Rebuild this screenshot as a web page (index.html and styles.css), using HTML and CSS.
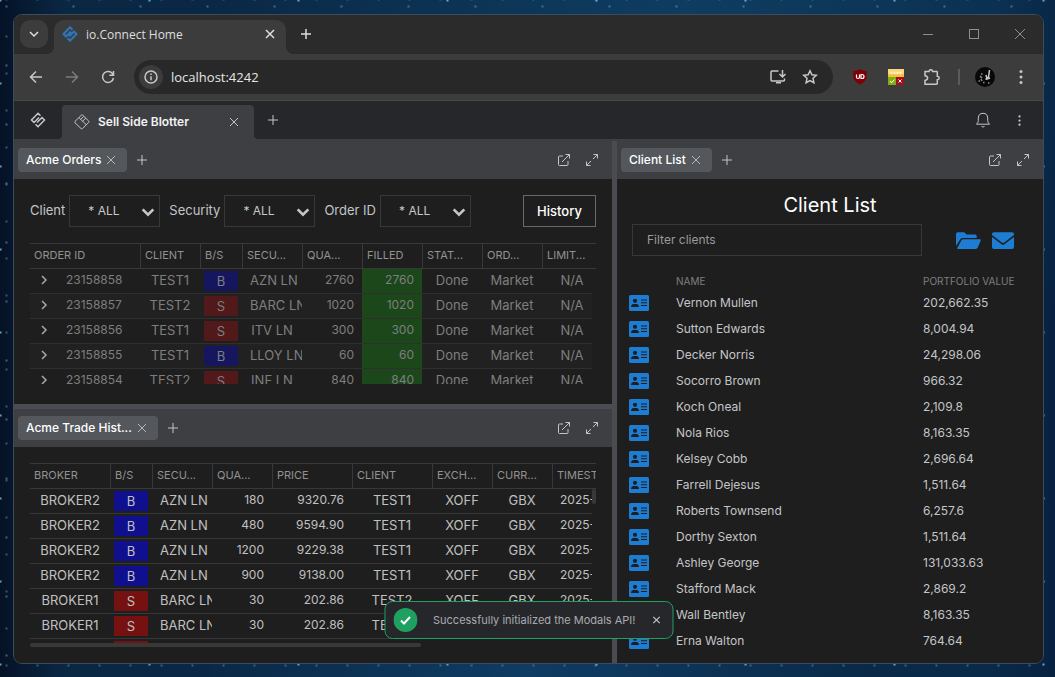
FILE: index.html
```html
<!DOCTYPE html>
<html lang="en">
<head>
<meta charset="utf-8">
<title>io.Connect Home</title>
<link rel="stylesheet" href="styles.css">
</head>
<body>
<svg class="defs" aria-hidden="true">
  <symbol id="close" viewBox="0 0 10 10"><path d="M1 1l8 8M9 1l-8 8"/></symbol>
  <symbol id="plus" viewBox="0 0 10 10"><path d="M5 0v10M0 5h10"/></symbol>
  <symbol id="chev" viewBox="0 0 12 12"><path d="M2 4l4 4 4-4"/></symbol>
  <symbol id="right" viewBox="0 0 10 10"><path d="M3 1l4 4-4 4"/></symbol>
  <symbol id="popout" viewBox="0 0 14 14"><path d="M6 3H2.500q-1 0-1 1v7.500q0 1 1 1H10q1 0 1-1V8M5 9l7.500-7.500M8.500 1.500h4v4"/></symbol>
  <symbol id="expand" viewBox="0 0 14 14"><path d="M8.500 1.500h4v4M12.500 1.500L8 6M1.500 8.500v4h4M1.500 12.500L6 8"/></symbol>
  <symbol id="dots" viewBox="0 0 4 16"><circle cx="2" cy="2.500" r="1.500"/><circle cx="2" cy="8" r="1.500"/><circle cx="2" cy="13.500" r="1.500"/></symbol>
  <symbol id="logo" viewBox="0 0 16 16"><path d="M10.500 3.800L8 1.300 1.500 8 4 10.500l5-5M5.500 12.200L8 14.700 14.500 8 12 5.500l-5 5"/></symbol>
  <symbol id="card" viewBox="0 0 20 16"><rect width="20" height="16" rx="1.500" fill="#1d7dd3"/><g fill="#1e1e1e"><circle cx="6" cy="5.800" r="2.100"/><path d="M2 12q.3-3 2.500-3h3q2.200 0 2.500 3z"/><path d="M12 4.500h6v1h-6zM12 7.200h6v1h-6zM12 9.900h6v1h-6z"/></g></symbol>
</svg>
<div class="window">
  <header class="titlebar">
    <button class="tab-search" aria-label="Search tabs"><svg class="ic12 bold"><use href="#chev"/></svg></button>
    <div class="browser-tab">
      <svg class="ic16 blue"><use href="#logo"/></svg>
      <span class="tab-title">io.Connect Home</span>
      <button aria-label="Close tab"><svg class="ic10 bold"><use href="#close"/></svg></button>
    </div>
    <button class="new-tab" aria-label="New tab"><svg class="ic10 bold"><use href="#plus"/></svg></button>
    <div class="win-controls">
      <button aria-label="Minimize"><svg class="ic10" viewBox="0 0 10 10"><path d="M0 5.500h10"/></svg></button>
      <button aria-label="Maximize"><svg class="ic10" viewBox="0 0 10 10"><rect x=".5" y=".5" width="9" height="9"/></svg></button>
      <button aria-label="Close"><svg class="ic10" viewBox="0 0 10 10"><path d="M0 0l10 10M10 0L0 10"/></svg></button>
    </div>
  </header>
  <div class="toolbar">
    <button aria-label="Back"><svg class="ic14 bold" viewBox="0 0 14 14"><path d="M13 7H1.500M7 1.500L1.500 7 7 12.500"/></svg></button>
    <button class="faded" aria-label="Forward"><svg class="ic14 bold" viewBox="0 0 14 14"><path d="M1 7h11.500M7 1.500L12.500 7 7 12.500"/></svg></button>
    <button aria-label="Reload"><svg class="ic14 bold" viewBox="0 0 14 14"><path d="M12 4.500A5.500 5.500 0 1 0 12.500 8M12.500 1v4.200H8.300"/></svg></button>
    <div class="address">
      <button class="info" aria-label="Site information"><svg class="ic14" viewBox="0 0 14 14"><circle cx="7" cy="7" r="6" stroke-width="1.500"/><path d="M7 6.300v4M7 3.500v1.500" stroke-width="1.500"/></svg></button>
      <input aria-label="Address" value="localhost:4242">
      <button aria-label="Install"><svg class="ic16 bold" viewBox="0 0 16 16"><path d="M8.500 2H2q-1 0-1 1v8q0 1 1 1h11.500q1 0 1-1V9.500M12.500 1v6.500M9.500 5l3 3 3-3M6 13.800h5" /></svg></button>
      <button aria-label="Bookmark"><svg class="ic16 bold" viewBox="0 0 16 16"><path d="M8 1.800l1.900 4 4.400.5-3.300 3 .9 4.400L8 11.500l-3.900 2.200.9-4.400-3.300-3 4.400-.5z"/></svg></button>
    </div>
    <button class="ext" aria-label="Content blocker"><svg class="ic16" viewBox="0 0 16 16"><path d="M8 .3q3 1.700 6.700 1.700v5.500Q14.700 12 8 15.700 1.300 12 1.300 7.500V2Q5 2 8 .3z" fill="#800007" stroke="none"/><path d="M4.500 5.500v2.500q0 1.500 1.500 1.500t1.500-1.500V5.500M9 5.500h1q2 0 2 2t-2 2H9z" stroke="#fff" stroke-width="1.200"/></svg></button>
    <button class="ext" aria-label="Validator"><svg class="ic16" viewBox="0 0 16 16"><g stroke="none"><path d="M0 0h16v8H0z" fill="#f5bf38"/><path d="M0 0h16v5H0z" fill="#fad77c"/><path d="M0 8h8v8H0z" fill="#82ad12"/><path d="M8 8h8v8H8z" fill="#a01018"/></g><path d="M2.500 4h11" stroke="#fff2cf" stroke-width="2.500" stroke-dasharray="2 1"/><path d="M2 12l1.500 1.800L6.500 10.500M10.500 10.500l3 3M13.500 10.500l-3 3" stroke="#fff"/></svg></button>
    <button class="ext" aria-label="Extensions"><svg class="ic16 bold" viewBox="0 0 16 16"><path d="M1 2.500h4q.2-1.800 1.800-1.800t1.800 1.800h4q.7 0 .7.700v4q1.900.2 1.900 1.800t-1.900 1.800v3.700q0 .7-.7.700H1v-3.800q2.600-.3 2.600-2.300T1 6.800z"/></svg></button>
    <span class="divider"></span>
    <button class="avatar" aria-label="Profile"><svg viewBox="0 0 20 20"><circle cx="10" cy="10" r="10" fill="#080808" stroke="none"/><path d="M14.500 3l-1 7-3 2.500M11 8l1 4 3-1" stroke="#c8c8c8" stroke-width="1.500"/><path d="M5 9l2 2M6 7h1.500M8 15.500h1.500M13 16h1.500M3.500 14h1.500M6 12l1 2" stroke="#8c8c8c" stroke-width="1.500"/></svg></button>
    <button class="more" aria-label="Menu"><svg class="dots"><use href="#dots"/></svg></button>
  </div>

  <nav class="workspace-bar">
    <button class="home" aria-label="Home"><svg class="ic16 mark"><use href="#logo"/></svg></button>
    <div class="workspace-tab">
      <svg class="ic16" viewBox="0 0 16 16"><path d="M8.700 1.200l6 5.800q.7.700 0 1.400L8.500 14.600q-.7.600-1.400 0L1 8.800q-.7-.7 0-1.400l6.300-6.200q.7-.7 1.400 0zM5 3.700l7 6.800M8.500 7.200l3.300-3M5 3.700M9.700 8.300l0 0M6.700 5.400l3-3"/></svg>
      <span class="tab-title">Sell Side Blotter</span>
      <button aria-label="Close workspace"><svg class="ic10"><use href="#close"/></svg></button>
    </div>
    <button class="new-tab" aria-label="New workspace"><svg class="ic10"><use href="#plus"/></svg></button>
    <button class="push icon-btn" aria-label="Notifications"><svg class="ic16" viewBox="0 0 16 16"><path d="M1.500 12.200q1.800-1.500 1.800-3.700V6Q3.500 1.300 8 1.300T12.700 6v2.500q0 2.200 1.800 3.700zM6.500 14.500q1.500 1 3 0"/></svg></button>
    <button class="icon-btn" aria-label="Workspace menu"><svg class="dots thin"><use href="#dots"/></svg></button>
  </nav>

  <main class="workspace">
    <div class="column">
      <section class="panel">
        <header class="group-bar first">
          <div class="group-tab"><span>Acme Orders</span><button aria-label="Close Acme Orders"><svg class="ic10"><use href="#close"/></svg></button></div>
          <button class="add" aria-label="Add"><svg class="ic10"><use href="#plus"/></svg></button>
          <button class="push icon28" aria-label="Pop out"><svg class="ic14"><use href="#popout"/></svg></button>
          <button class="icon28" aria-label="Maximize"><svg class="ic14"><use href="#expand"/></svg></button>
        </header>
        <div class="content">
          <form class="filters">
            <label>Client <span class="select"><select><option>* ALL</option></select><svg class="arrow"><use href="#chev"/></svg></span></label>
            <label>Security <span class="select"><select><option>* ALL</option></select><svg class="arrow"><use href="#chev"/></svg></span></label>
            <label>Order ID <span class="select"><select><option>* ALL</option></select><svg class="arrow"><use href="#chev"/></svg></span></label>
            <button type="button" class="history">History</button>
          </form>
          <div class="grid orders">
            <table>
              <colgroup><col class="w110"><col class="w60"><col class="w42"><col class="w60"><col class="w60"><col class="w60"><col class="w60"><col class="w60"><col class="w60"></colgroup>
              <thead><tr><th>ORDER ID</th><th>CLIENT</th><th>B/S</th><th>SECU...</th><th>QUA...</th><th>FILLED</th><th>STAT...</th><th>ORD...</th><th>LIMIT...</th></tr></thead>
              <tbody>
                <tr><td class="oid"><svg class="ic10 bold"><use href="#right"/></svg>23158858</td><td>TEST1</td><td class="side"><b class="buy">B</b></td><td>AZN LN</td><td class="num">2760</td><td class="num fill">2760</td><td>Done</td><td>Market</td><td>N/A</td></tr>
                <tr><td class="oid"><svg class="ic10 bold"><use href="#right"/></svg>23158857</td><td>TEST2</td><td class="side"><b class="sell">S</b></td><td>BARC LN</td><td class="num">1020</td><td class="num fill">1020</td><td>Done</td><td>Market</td><td>N/A</td></tr>
                <tr><td class="oid"><svg class="ic10 bold"><use href="#right"/></svg>23158856</td><td>TEST1</td><td class="side"><b class="sell">S</b></td><td>ITV LN</td><td class="num">300</td><td class="num fill">300</td><td>Done</td><td>Market</td><td>N/A</td></tr>
                <tr><td class="oid"><svg class="ic10 bold"><use href="#right"/></svg>23158855</td><td>TEST1</td><td class="side"><b class="buy">B</b></td><td>LLOY LN</td><td class="num">60</td><td class="num fill">60</td><td>Done</td><td>Market</td><td>N/A</td></tr>
                <tr><td class="oid"><svg class="ic10 bold"><use href="#right"/></svg>23158854</td><td>TEST2</td><td class="side"><b class="sell">S</b></td><td>INF LN</td><td class="num">840</td><td class="num fill">840</td><td>Done</td><td>Market</td><td>N/A</td></tr>
              </tbody>
            </table>
            <div class="track"></div>
          </div>
        </div>
      </section>
      <div class="splitter"></div>
      <section class="panel">
        <header class="group-bar">
          <div class="group-tab"><span>Acme Trade Hist...</span><button aria-label="Close Acme Trade History"><svg class="ic10"><use href="#close"/></svg></button></div>
          <button class="add" aria-label="Add"><svg class="ic10"><use href="#plus"/></svg></button>
          <button class="push icon28" aria-label="Pop out"><svg class="ic14"><use href="#popout"/></svg></button>
          <button class="icon28" aria-label="Maximize"><svg class="ic14"><use href="#expand"/></svg></button>
        </header>
        <div class="content">
          <div class="grid trades">
            <table>
              <colgroup><col class="w80"><col class="w42"><col class="w60"><col class="w60"><col class="w80"><col class="w80"><col class="w60"><col class="w60"><col class="w110"></colgroup>
              <thead><tr><th>BROKER</th><th>B/S</th><th>SECU...</th><th>QUA...</th><th>PRICE</th><th>CLIENT</th><th>EXCH...</th><th>CURR...</th><th>TIMESTAMP</th></tr></thead>
              <tbody>
                <tr><td>BROKER2</td><td class="side"><b class="buy">B</b></td><td>AZN LN</td><td class="num">180</td><td class="num">9320.76</td><td>TEST1</td><td>XOFF</td><td>GBX</td><td class="date">2025-</td></tr>
                <tr><td>BROKER2</td><td class="side"><b class="buy">B</b></td><td>AZN LN</td><td class="num">480</td><td class="num">9594.90</td><td>TEST1</td><td>XOFF</td><td>GBX</td><td class="date">2025-</td></tr>
                <tr><td>BROKER2</td><td class="side"><b class="buy">B</b></td><td>AZN LN</td><td class="num">1200</td><td class="num">9229.38</td><td>TEST1</td><td>XOFF</td><td>GBX</td><td class="date">2025-</td></tr>
                <tr><td>BROKER2</td><td class="side"><b class="buy">B</b></td><td>AZN LN</td><td class="num">900</td><td class="num">9138.00</td><td>TEST1</td><td>XOFF</td><td>GBX</td><td class="date">2025-</td></tr>
                <tr><td>BROKER1</td><td class="side"><b class="sell">S</b></td><td>BARC LN</td><td class="num">30</td><td class="num">202.86</td><td>TEST2</td><td>XOFF</td><td>GBX</td><td class="date">2025-</td></tr>
                <tr><td>BROKER1</td><td class="side"><b class="sell">S</b></td><td>BARC LN</td><td class="num">30</td><td class="num">202.86</td><td>TEST2</td><td>XOFF</td><td>GBX</td><td class="date">2025-</td></tr>
                <tr><td></td><td class="side"><b class="sell"></b></td><td></td><td></td><td></td><td></td><td></td><td></td><td></td></tr>
              </tbody>
            </table>
            <div class="track"><div class="thumb"></div></div>
          </div>
          <div class="h-thumb"></div>
        </div>
      </section>
    </div>
    <div class="splitter vertical"></div>
    <section class="panel">
      <header class="group-bar first">
        <div class="group-tab"><span>Client List</span><button aria-label="Close Client List"><svg class="ic10"><use href="#close"/></svg></button></div>
        <button class="add" aria-label="Add"><svg class="ic10"><use href="#plus"/></svg></button>
        <button class="push icon28" aria-label="Pop out"><svg class="ic14"><use href="#popout"/></svg></button>
        <button class="icon28" aria-label="Maximize"><svg class="ic14"><use href="#expand"/></svg></button>
      </header>
      <div class="content clients">
        <h1>Client List</h1>
        <div class="search">
          <input type="text" placeholder="Filter clients" aria-label="Filter clients">
          <button aria-label="Open folder"><svg class="folder" viewBox="0 0 25 17"><path d="M0 14V2Q0 .3 1.700.3h6.500L10.500 2.500H19q1.700 0 1.700 1.700V6H7Q4.800 6 3.800 8z"/><path d="M5.200 8.700q.6-1.400 2-1.400H24q1.200 0 .7 1.300L21.800 15.500q-.6 1.400-2 1.400H2q-1.200 0-.5-1.300z"/></svg></button>
          <button aria-label="Send mail"><svg class="mail" viewBox="0 0 22 17"><path d="M2 .3h18q2 0 2 1.700v1L11.800 10.700q-.8.600-1.600 0L0 3V2Q0 .3 2 .3z"/><path d="M0 5l9.600 7.300q1.400 1 2.800 0L22 5v10q0 1.900-2 1.900H2q-2 0-2-1.900z"/></svg></button>
        </div>
        <table class="client-table">
          <colgroup><col class="w47"><col><col class="w120"></colgroup>
          <thead><tr><th></th><th>NAME</th><th>PORTFOLIO VALUE</th></tr></thead>
          <tbody>
            <tr><td><svg><use href="#card"/></svg></td><td>Vernon Mullen</td><td>202,662.35</td></tr>
            <tr><td><svg><use href="#card"/></svg></td><td>Sutton Edwards</td><td>8,004.94</td></tr>
            <tr><td><svg><use href="#card"/></svg></td><td>Decker Norris</td><td>24,298.06</td></tr>
            <tr><td><svg><use href="#card"/></svg></td><td>Socorro Brown</td><td>966.32</td></tr>
            <tr><td><svg><use href="#card"/></svg></td><td>Koch Oneal</td><td>2,109.8</td></tr>
            <tr><td><svg><use href="#card"/></svg></td><td>Nola Rios</td><td>8,163.35</td></tr>
            <tr><td><svg><use href="#card"/></svg></td><td>Kelsey Cobb</td><td>2,696.64</td></tr>
            <tr><td><svg><use href="#card"/></svg></td><td>Farrell Dejesus</td><td>1,511.64</td></tr>
            <tr><td><svg><use href="#card"/></svg></td><td>Roberts Townsend</td><td>6,257.6</td></tr>
            <tr><td><svg><use href="#card"/></svg></td><td>Dorthy Sexton</td><td>1,511.64</td></tr>
            <tr><td><svg><use href="#card"/></svg></td><td>Ashley George</td><td>131,033.63</td></tr>
            <tr><td><svg><use href="#card"/></svg></td><td>Stafford Mack</td><td>2,869.2</td></tr>
            <tr><td><svg><use href="#card"/></svg></td><td>Wall Bentley</td><td>8,163.35</td></tr>
            <tr><td><svg><use href="#card"/></svg></td><td>Erna Walton</td><td>764.64</td></tr>
          </tbody>
        </table>
      </div>
    </section>
    <div class="toast" role="status">
      <svg class="ok" viewBox="0 0 24 24"><circle cx="12" cy="12" r="12"/><path d="M7.500 12.500l3 3 6-6.500"/></svg>
      <span>Successfully initialized the Modals API!</span>
      <button aria-label="Dismiss"><svg class="ic8"><use href="#close"/></svg></button>
    </div>
  </main>
</div>
</body>
</html>
```

FILE: styles.css
```css
* { box-sizing: border-box; }
body {
  margin: 0;
  height: 100vh;
  padding: 14px 11px 13px 13px;
  font-family: Inter, "Liberation Sans", sans-serif;
  font-size: 12px;
  color: #c4c5c8;
  background-color: #0a2440;
  background-image:
    radial-gradient(circle, rgba(130, 195, 230, .8) 0, transparent 2px),
    radial-gradient(circle, rgba(80, 150, 200, .6) 0, transparent 2px),
    radial-gradient(circle, rgba(90, 150, 190, .5) 0, transparent 2px),
    radial-gradient(ellipse at 50% 100%, #0f3c63 0, transparent 45%),
    radial-gradient(ellipse at 65% 0, #0e3d61 0, transparent 50%),
    linear-gradient(90deg, #051226 0, #0a2744 6%, #0a2a49 94%, #082140 100%);
  background-size: 149px 83px, 67px 59px, 31px 37px, auto, auto, auto;
  background-position: 75px 42px, 40px 36px, 22px 18px, 0 0, 0 0, 0 0;
}
button { border: 0; padding: 0; margin: 0; background: none; color: inherit; font: inherit; display: flex; align-items: center; justify-content: center; flex: none; }
svg { fill: none; stroke: currentColor; stroke-width: 1; flex: none; display: block; }
.defs { position: absolute; width: 0; height: 0; }
.ic8 { width: 8px; height: 8px; stroke-width: 1.500; }
.ic10 { width: 10px; height: 10px; }
.ic12 { width: 12px; height: 12px; }
.ic14 { width: 14px; height: 14px; }
.ic16 { width: 16px; height: 16px; }
.bold { stroke-width: 2; }
.blue { color: #2e76b8; stroke-width: 2; }
.mark { stroke-width: 1.500; }
.push { margin-left: auto; }
.dots { width: 4px; height: 16px; fill: currentColor; stroke: none; }
.dots.thin { width: 3px; height: 13px; }

.window { height: 100%; display: flex; flex-direction: column; border: 1px solid #3d4b5b; border-radius: 9px; overflow: hidden; background: #1e1e1e; }

.titlebar { display: flex; height: 39px; flex: none; background: #2b2b2b; padding: 5px 0 0 6px; color: #dedede; font-family: "Open Sans", sans-serif; }
.tab-search { width: 28px; height: 28px; border-radius: 10px; background: #3c3c3c; margin-right: 6px; }
.browser-tab { position: relative; display: flex; align-items: center; width: 232px; height: 34px; padding: 0 11px 6px 8px; border-radius: 10px 10px 0 0; background: #3c3c3c; }
.tab-title { flex: 1; margin-left: 8px; white-space: nowrap; }
.browser-tab::before, .browser-tab::after { content: ""; position: absolute; bottom: 0; width: 8px; height: 8px; }
.browser-tab::before { left: -8px; background: radial-gradient(circle at 0 0, transparent 8px, #3c3c3c 8px); }
.browser-tab::after { right: -8px; background: radial-gradient(circle at 100% 0, transparent 8px, #3c3c3c 8px); }
.titlebar .new-tab { width: 40px; height: 28px; }
.titlebar .bold { stroke-width: 1.500; }
.win-controls { display: flex; margin-left: auto; color: #8f8f8f; }
.win-controls button { width: 46px; height: 28px; }

.toolbar { display: flex; align-items: center; height: 47px; flex: none; background: #3c3c3c; border-bottom: 1px solid #474747; padding: 0 4px 0 4px; color: #c8c8c8; }
.toolbar > button { width: 36px; height: 34px; }
.toolbar .bold { stroke-width: 1.500; }
.toolbar .faded { color: #7c7c7c; }
.address { display: flex; align-items: center; flex: 1; height: 34px; margin: 0 9px 0 8px; padding: 0 7px 0 5px; border-radius: 17px; background: #282828; }
.address button { width: 32px; height: 24px; }
.address .info { width: 24px; border-radius: 12px; background: #3c3c3c; }
.address input { flex: 1; min-width: 0; border: 0; padding: 0 8px; background: none; color: #e6e6e6; font: 13px "Open Sans", sans-serif; }
.divider { width: 2px; height: 16px; background: #5c5c5c; margin: 0 7px 0 8px; }
.toolbar .avatar svg { width: 20px; height: 20px; }

.workspace-bar { display: flex; align-items: center; height: 38px; flex: none; background: #26272b; padding-right: 6px; }
.home { width: 48px; height: 38px; }
.workspace-tab { position: relative; align-self: flex-end; display: flex; align-items: center; width: 192px; height: 34px; padding: 0 15px 0 12px; border-radius: 4px 4px 0 0; background: #3e3f43; }
.workspace-tab::before, .workspace-tab::after { content: ""; position: absolute; bottom: 0; width: 4px; height: 4px; }
.workspace-tab::before { left: -4px; background: radial-gradient(circle at 0 0, transparent 4px, #3e3f43 4px); }
.workspace-tab::after { right: -4px; background: radial-gradient(circle at 100% 0, transparent 4px, #3e3f43 4px); }
.workspace-tab .tab-title { padding-bottom: 2px; font-weight: 600; color: #f2f2f3; }
.workspace-bar .new-tab { width: 38px; height: 38px; }
.icon-btn { width: 36px; height: 36px; }

.workspace { position: relative; flex: 1; min-height: 0; display: grid; grid-template-columns: 598fr 5px 426fr; background: #3e3f43; }
.column { display: grid; grid-template-rows: 265fr 5px 254fr; min-width: 0; min-height: 0; }
.splitter { background: #4b4c52; }
.splitter.vertical { margin-top: 2px; }
.panel { display: flex; flex-direction: column; min-width: 0; min-height: 0; overflow: hidden; background: #1e1e1e; }
.group-bar { display: flex; align-items: center; height: 38px; flex: none; padding: 0 6px 0 4px; background: #3e3f43; }
.group-bar.first { height: 40px; padding-top: 2px; }
.group-tab { display: flex; align-items: center; height: 24px; padding: 0 11px 0 8px; gap: 5px; border-radius: 4px; background: #54585d; color: #fff; font-weight: 500; white-space: nowrap; }
.group-tab span { padding-bottom: 1px; }
.group-tab button { color: #b5b7ba; }
.add { width: 30px; height: 24px; }
.icon28 { width: 28px; height: 24px; }
.content { flex: 1; min-height: 0; padding: 16px; display: flex; flex-direction: column; }

.filters { display: flex; align-items: center; gap: 9px; margin-bottom: 16px; font-size: 13px; line-height: 30px; }
.filters label { display: flex; gap: 4px; white-space: nowrap; }
.select { position: relative; width: 91px; }
.select select { display: block; appearance: none; width: 100%; height: 32px; padding: 0 0 1px 18px; border: 1px solid #383838; border-radius: 0; background: #1e1e1e; color: #c8c8c8; font: 12px Inter, sans-serif; }
.arrow { position: absolute; right: 4px; top: 9px; width: 16px; height: 16px; stroke-width: 2; pointer-events: none; }
.history { margin-left: auto; width: 73px; height: 32px; padding-bottom: 1px; border: 1px solid #696969; color: #fff; font-weight: 500; }

.grid { position: relative; flex: 1; min-height: 0; overflow: hidden; border-top: 1px solid #383838; }
.grid.orders { margin-bottom: 4px; }
.grid table { table-layout: fixed; width: 0; border-collapse: separate; border-spacing: 0; }
.w42 { width: 42px; } .w47 { width: 47px; } .w60 { width: 60px; } .w80 { width: 80px; } .w110 { width: 110px; } .w120 { width: 120px; }
.grid th { height: 25px; padding: 0 0 2px 4px; border-left: 1px solid #383838; border-bottom: 1px solid #383838; font-size: 11px; font-weight: 400; color: #929292; text-align: left; white-space: nowrap; overflow: hidden; }
.grid th:first-child { border-left: 0; }
.grid td { height: 25px; padding: 0 8px 2px; border-bottom: 1px solid #383838; font-size: 13px; line-height: 20px; text-align: center; white-space: nowrap; overflow: hidden; color: #c0c0c0; }
.grid td.num { text-align: right; font-size: 12px; }
.grid td.date { text-align: left; font-size: 12px; }
.grid td.side { padding: 2px 4px; }
.side b { display: block; height: 20px; font-weight: 400; }
.buy { background: #10108f; }
.sell { background: #761111; }
.orders td { color: #7e7e7e; border-bottom-color: #2f2f2f; }
.orders tr:nth-child(even) td { background: #212121; }
.orders .buy { background: #16165e; }
.orders .sell { background: #511919; }
.orders td.oid { font-size: 12px; text-align: left; }
.oid svg { display: inline-block; margin: 0 17px 0 1px; color: #a8a8a8; stroke-width: 1.500; vertical-align: -1px; }
.orders tr td.fill { background: #1b471b; }
.track { position: absolute; top: 25px; right: 0; bottom: 0; width: 4px; background: #1e1e1e; }
.thumb { height: 15px; background: #383838; border-radius: 2px; }
.h-thumb { flex: none; width: 69%; height: 4px; border-radius: 2px; background: #383838; }

.clients { padding: 12px 0 0; }
.clients h1 { margin: 0 0 5px; font-size: 20px; line-height: 28px; font-weight: 400; color: #fff; text-align: center; }
.search { display: flex; align-items: center; padding: 0 29px 0 15px; gap: 11px; }
.search input { flex: 1; min-width: 0; height: 32px; margin-right: 23px; padding: 0 14px 2px; border: 1px solid #383838; background: #1e1e1e; color: #c8c8c8; font: 12px Inter, sans-serif; }
.search input::placeholder { color: #9a9a9a; }
.search svg { height: 17px; fill: #1d7dd3; stroke: none; }
.folder { width: 25px; }
.mail { width: 22px; }
.client-table { table-layout: fixed; width: calc(100% - 12px); margin: 18px 0 0 12px; border-collapse: collapse; }
.client-table th { height: 16px; padding: 0 0 2px; font-size: 10px; font-weight: 400; color: #7e7e7e; text-align: left; }
.client-table td { height: 26px; padding: 0 0 2px; }
.client-table td:first-child { padding: 0; }
.client-table svg { width: 20px; height: 16px; stroke: none; }

.toast { position: absolute; left: 50%; bottom: 24px; transform: translateX(-50%); width: 289px; height: 38px; display: flex; align-items: center; padding: 0 12px 0 8px; border: 1px solid #20a060; border-radius: 8px; background: #26272b; font-size: 11px; white-space: nowrap; }
.toast span { flex: 1; margin-left: 16px; color: #a9abb0; }
.toast .ok { width: 24px; height: 24px; fill: #20a060; stroke: none; }
.ok path { fill: none; stroke: #fff; stroke-width: 2; }
```
